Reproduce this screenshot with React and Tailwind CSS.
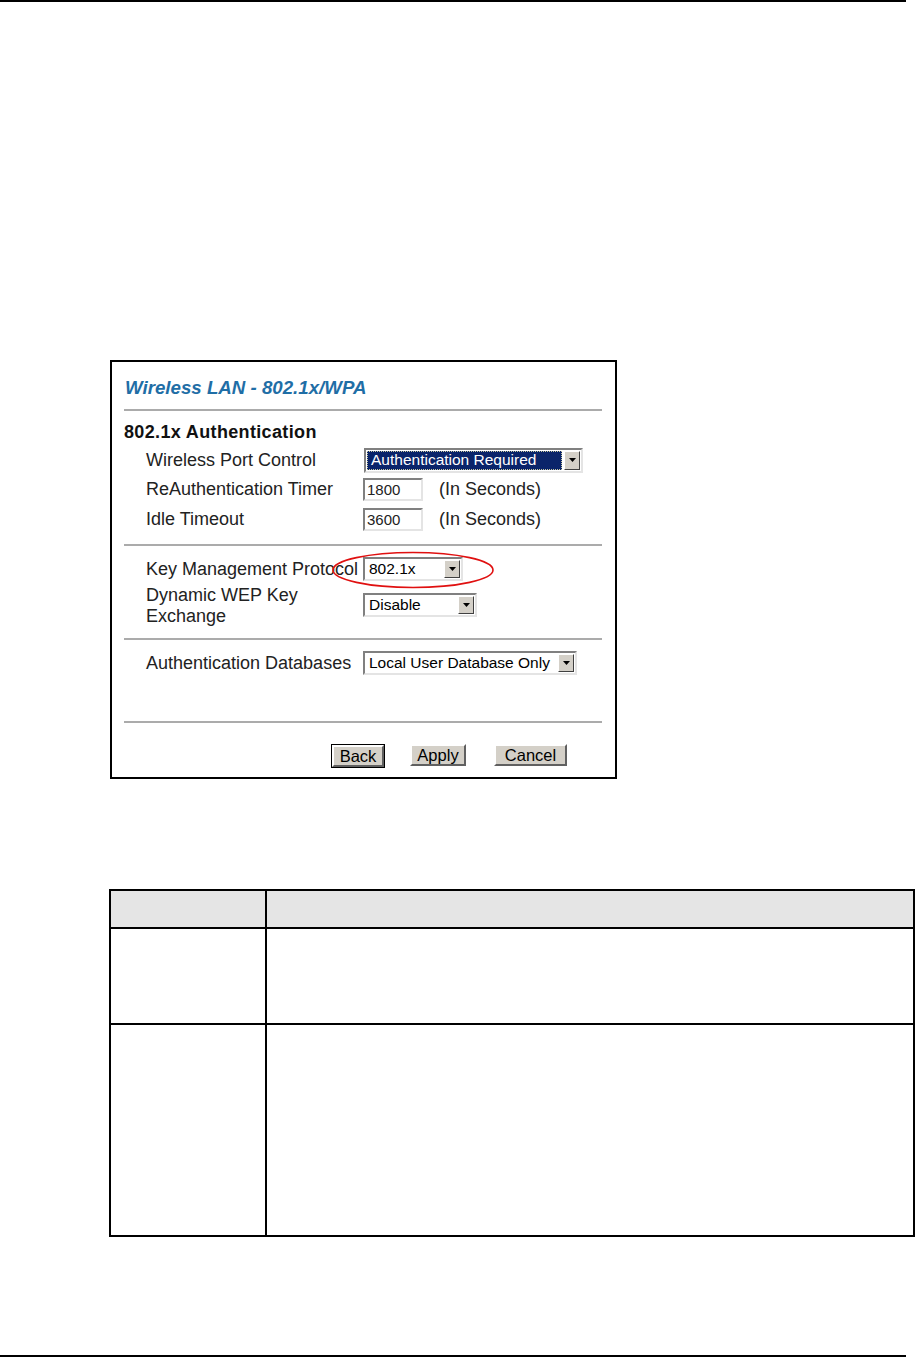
import React from "react";

const font = { fontFamily: '"Liberation Sans", Arial, sans-serif' };

function Arrow() {
  return (
    <div className="flex h-full w-[16px] shrink-0 items-center justify-center border border-t-white border-l-white border-r-[#404040] border-b-[#404040] bg-[#d4d0c8]">
      <svg width="7" height="4" viewBox="0 0 7 4">
        <path d="M0 0h7L3.5 4z" fill="#000" />
      </svg>
    </div>
  );
}

function Select({ width, value, selected, height = "h-[24px]" }) {
  return (
    <div
      className={`flex ${height} ${width} items-stretch border-2 border-t-[#808080] border-l-[#808080] border-r-[#e4e4e4] border-b-[#e4e4e4] bg-white p-px text-[15.5px] leading-none`}
    >
      <div className="flex min-w-0 flex-1 items-center overflow-hidden whitespace-nowrap pr-[2px]">
        {selected ? (
          <span className="flex h-full w-full items-center border border-dotted border-[#c8c8a0] bg-[#0a246a] pl-[3px] text-white">
            {value}
          </span>
        ) : (
          <span className="pl-[3px] text-black">{value}</span>
        )}
      </div>
      <Arrow />
    </div>
  );
}

function TextBox({ value }) {
  return (
    <div className="flex h-[23px] w-[60px] items-center border-2 border-t-[#808080] border-l-[#808080] border-r-[#e4e4e4] border-b-[#e4e4e4] bg-white pl-[2px] text-[15px] leading-none">
      {value}
    </div>
  );
}

function Button({ children, width, isDefault }) {
  return (
    <div className={isDefault ? "border border-black" : ""}>
      <div
        className={`flex h-[22px] ${width} items-center justify-center border-2 border-t-white border-l-white border-r-[#606060] border-b-[#606060] bg-[#d4d0c8] text-[16.5px] leading-none text-black`}
      >
        {children}
      </div>
    </div>
  );
}

function Separator({ className }) {
  return <div className={`h-[2px] bg-[#ababab] ${className}`} />;
}

export default function App() {
  return (
    <div className="relative h-[1358px] w-[916px] bg-white text-black" style={font}>
      <div className="h-[2px] w-[906px] bg-black" />

      {/* web configurator screenshot */}
      <div className="relative ml-[110px] mt-[358px] h-[419px] w-[507px] border-2 border-black pl-[12px] pr-[13px] pt-[15px]">
        <div className="pl-px text-[18.7px] font-bold italic leading-[22px] text-[#1f6ea6]">
          Wireless LAN - 802.1x/WPA
        </div>
        <Separator className="mt-[10px]" />

        <div className="mt-[10px] text-[18px] font-bold leading-[22px] tracking-[0.35px] text-[#111]">
          802.1x Authentication
        </div>

        <div className="pl-[22px] text-[18px] text-[#222]">
          <div className="mt-[5px] flex h-[24px] items-center">
            <div className="w-[218px] whitespace-nowrap">Wireless Port Control</div>
            <Select width="w-[219px]" height="h-[25px]" value="Authentication Required" selected />
          </div>
          <div className="mt-[5px] flex h-[24px] items-center">
            <div className="w-[217px] whitespace-nowrap">ReAuthentication Timer</div>
            <TextBox value="1800" />
            <div className="ml-[16px]">(In Seconds)</div>
          </div>
          <div className="mt-[6px] flex h-[24px] items-center">
            <div className="w-[217px] whitespace-nowrap">Idle Timeout</div>
            <TextBox value="3600" />
            <div className="ml-[16px]">(In Seconds)</div>
          </div>
        </div>

        <Separator className="mt-[13px]" />

        <div className="pl-[22px] text-[18px] text-[#222]">
          <div className="mt-[11px] flex h-[24px] items-center">
            <div className="w-[217px] whitespace-nowrap">Key Management Protocol</div>
            <Select width="w-[100px]" value="802.1x" />
          </div>
          <div className="mt-[4px] flex h-[42px] items-start">
            <div className="w-[217px] leading-[21px]">
              Dynamic WEP Key
              <br />
              Exchange
            </div>
            <div className="mt-[8px]">
              <Select width="w-[114px]" value="Disable" />
            </div>
          </div>
        </div>

        <Separator className="mt-[11px]" />

        <div className="pl-[22px] text-[18px] text-[#222]">
          <div className="mt-[11px] flex h-[24px] items-center">
            <div className="w-[217px] whitespace-nowrap">Authentication Databases</div>
            <Select width="w-[214px]" value="Local User Database Only" />
          </div>
        </div>

        <Separator className="mt-[46px]" />

        <div className="mt-[21px] flex items-start pl-[207px]">
          <Button width="w-[52px]" isDefault>
            Back
          </Button>
          <div className="ml-[25px]">
            <Button width="w-[56px]">Apply</Button>
          </div>
          <div className="ml-[28px]">
            <Button width="w-[73px]">Cancel</Button>
          </div>
        </div>

        {/* red highlight round the key management field */}
        <svg
          className="pointer-events-none absolute left-[220px] top-[189px]"
          width="162"
          height="38"
          viewBox="0 0 162 38"
        >
          <ellipse cx="81" cy="19" rx="80" ry="17.5" fill="none" stroke="#e01010" strokeWidth="1.6" />
        </svg>
      </div>

      {/* field description table */}
      <div className="ml-[109px] mt-[110px] w-[806px] border-2 border-black">
        <div className="flex h-[36px] bg-[#e5e5e5]">
          <div className="w-[156px] border-r-2 border-black" />
          <div className="flex-1" />
        </div>
        <div className="flex h-[96px] border-t-2 border-black">
          <div className="w-[156px] border-r-2 border-black" />
          <div className="flex-1" />
        </div>
        <div className="flex h-[212px] border-t-2 border-black">
          <div className="w-[156px] border-r-2 border-black" />
          <div className="flex-1" />
        </div>
      </div>

      <div className="absolute left-0 top-[1355px] h-[2px] w-[906px] bg-black" />
    </div>
  );
}
